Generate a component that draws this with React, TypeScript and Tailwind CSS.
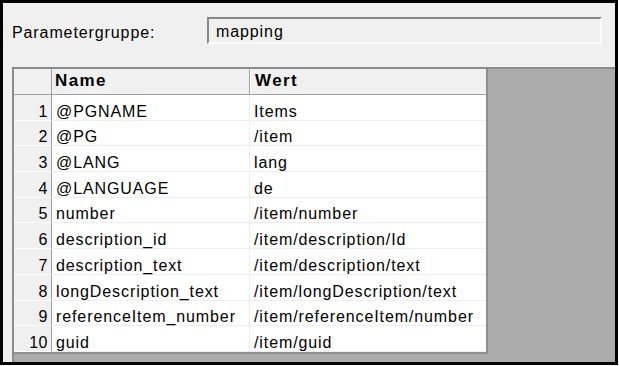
import React from "react";

const rows: [string, string][] = [
  ["@PGNAME", "Items"],
  ["@PG", "/item"],
  ["@LANG", "lang"],
  ["@LANGUAGE", "de"],
  ["number", "/item/number"],
  ["description_id", "/item/description/Id"],
  ["description_text", "/item/description/text"],
  ["longDescription_text", "/item/longDescription/text"],
  ["referenceItem_number", "/item/referenceItem/number"],
  ["guid", "/item/guid"],
];

export default function App() {
  return (
    <div className="w-[619px] h-[366px] bg-white font-['Liberation_Sans',Arial,sans-serif] text-[16px] tracking-[0.9px] text-black">
      <div className="w-[618px] h-[365px] border-[3px] border-black bg-[#f0f0f0] flex flex-col">
        <div className="h-[64px] flex shrink-0">
          <div className="ml-[9px] mt-[19.5px] h-[20px] leading-[20px] whitespace-nowrap">
            Parametergruppe:
          </div>
          <div className="ml-auto mr-[13px] mt-[14px] w-[395px] h-[27px] border-2 border-t-[#878787] border-l-[#878787] border-r-[#fcfcfc] border-b-[#fcfcfc] pl-[7px] pt-[3px] leading-[20px]">
            mapping
          </div>
        </div>
        <div className="flex-1 min-h-0 ml-[9px] bg-[#ababab] border-t-2 border-l-2 border-[#8c8c8c]">
          <div className="w-[474px] bg-white border-r-2 border-b-2 border-[#8e8e8e]">
            <div className="flex h-[26px] bg-[#f0f0f0] border-b border-[#a0a0a0] font-bold text-[17px] tracking-[1.4px]">
              <div className="w-[38px] shrink-0 border-r border-[#a0a0a0]" />
              <div className="w-[198px] shrink-0 border-r border-[#a0a0a0] pl-[3px] pt-[2px] leading-[20px]">
                Name
              </div>
              <div className="flex-1 border-l border-white pl-[4px] pt-[2px] leading-[20px]">
                Wert
              </div>
            </div>
            {rows.map(([name, value], i) => (
              <div key={i} className="flex h-[25.7px]">
                <div className="w-[38px] shrink-0 bg-[#f0f0f0] border-r border-b border-r-[#a0a0a0] border-b-white text-right pr-[3px] pt-[8.7px] leading-[16px] tracking-[0.5px]">
                  {i + 1}
                </div>
                <div className="w-[198px] shrink-0 border-r border-b border-[#eeeeee] pl-[4px] pt-[8.7px] leading-[16px] whitespace-nowrap">
                  {name}
                </div>
                <div className="flex-1 border-b border-[#eeeeee] pl-[4px] pt-[8.7px] leading-[16px] whitespace-nowrap">
                  {value}
                </div>
              </div>
            ))}
          </div>
        </div>
      </div>
    </div>
  );
}
